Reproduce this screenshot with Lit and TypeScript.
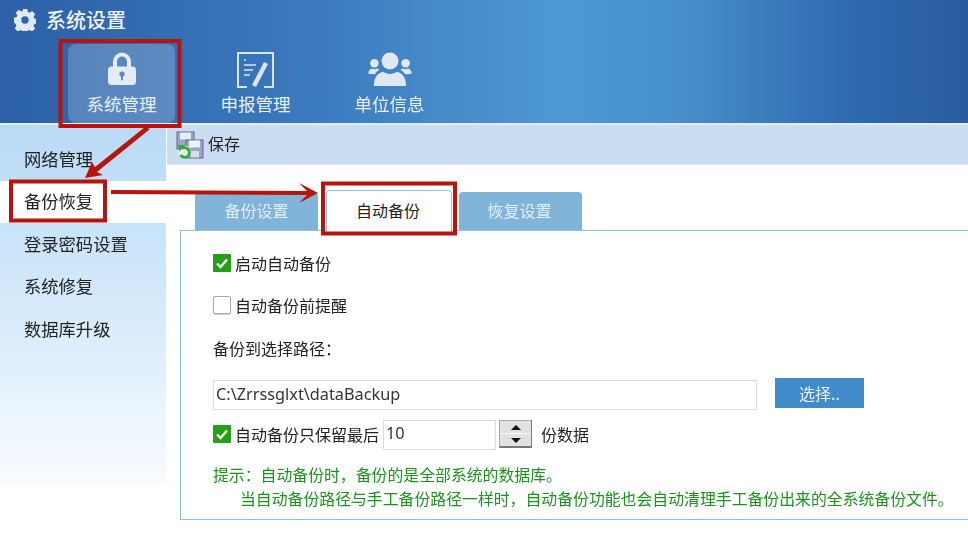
import { LitElement, html, css, svg } from "lit";
import { customElement } from "lit/decorators.js";

const gear = svg`<svg class="gear" viewBox="0 0 24 24" width="22" height="22"><path fill="#dfe8f3" fill-rule="evenodd" d="M9.500 0h5l.6 3.300 1.900.8 2.700-1.900 3.500 3.500-1.900 2.700.8 1.900 2.900.7v5l-2.900.6-.8 1.900 1.900 2.700-3.500 3.500-2.700-1.900-1.900.8-.6 3.300h-5l-.6-3.300-1.900-.8-2.700 1.900-3.500-3.500 1.900-2.700-.8-1.900L0 14.500v-5l2.900-.7.8-1.900-1.900-2.700 3.500-3.500 2.700 1.900 1.900-.8zM12 8a4 4 0 1 0 0 8 4 4 0 0 0 0-8z"/></svg>`;
const lock = svg`<svg viewBox="0 0 28 33" width="28" height="33"><path fill="none" stroke="#e3ebf5" stroke-width="4" d="M7 17V9.500a7 7 0 0 1 14 0V17"/><rect x="0" y="14.500" width="28" height="18.500" rx="3.500" fill="#e3ebf5"/><circle cx="14" cy="22" r="2.600" fill="#5f86bd"/><rect x="13" y="23" width="2" height="5.500" rx="1" fill="#5f86bd"/></svg>`;
const report = svg`<svg viewBox="0 0 37 36" width="37" height="36" fill="none" stroke="#d9e5f2"><path stroke-width="2" d="M10 35H1V1h35v34h-9"/><path stroke-width="1.600" d="M7 8h2M7 13h12M7 18h9M7 23h6"/><path stroke-width="4.500" d="M29 11 17 34"/></svg>`;
const people = svg`<svg viewBox="0 0 46 36" width="46" height="34" fill="#dfe8f3"><circle cx="23" cy="9.500" r="9"/><path d="M6 36c0-9 4-14 10-15 4 3 10 3 14 0 6 1 10 6 10 15-1 .6-33 .6-34 0z"/><circle cx="6.500" cy="12" r="4.500"/><path d="M0 23c0-3 2-5 4-5.500 2 1 3.500 1 5 0 1 .3 2 .8 3 1.500-2.500 1-4 2.500-5 4.500z"/><circle cx="39.500" cy="12" r="4.500"/><path d="M46 23c0-3-2-5-4-5.500-2 1-3.500 1-5 0-1 .3-2 .8-3 1.500 2.500 1 4 2.500 5 4.500z"/></svg>`;
const save = svg`<svg viewBox="0 0 28 28" width="28" height="28"><rect x="1" y="1" width="17" height="17" fill="#98a4c8" stroke="#5a6aa0"/><rect x="4" y="1.500" width="11" height="7" fill="#e8ecf5"/><rect x="10" y="9" width="17" height="18" fill="#9aa6c8" stroke="#5a6aa0"/><rect x="13" y="9.500" width="11" height="7" fill="#eef1f7"/><rect x="15" y="20" width="8" height="6.500" fill="#d9dde8"/><circle cx="8.500" cy="21" r="6.500" fill="#dff2df"/><path fill="none" stroke="#35a83a" stroke-width="2.800" d="M6 17.500a4.800 4.800 0 1 1-1.500 6.500"/><path fill="#35a83a" d="M2 14h7.500l-6 6.500z"/></svg>`;
const check = svg`<svg class="ck" viewBox="0 0 18 18" width="18" height="18"><rect width="18" height="18" rx="1" fill="#24a014"/><path d="M4 9.500 7.500 13 14 5.500" fill="none" stroke="#fff" stroke-width="2.400"/></svg>`;

@customElement("app-root")
export class AppRoot extends LitElement {
  static styles = css`
    :host { display: block; position: relative; width: 968px; height: 540px; overflow: hidden; background: #fff;
      font-family: "Noto Sans CJK SC", "Noto Sans", sans-serif; font-size: 16px; color: #222; line-height: 1; }
    .blur { width: 100%; height: 100%; filter: blur(0.4px); display: flex; flex-direction: column; }
    header { height: 123px; flex: none; border-bottom: 2px solid #e4eef8; box-sizing: content-box; display: flex; flex-direction: column;
      background: linear-gradient(90deg, #2b60a6 0%, #3a78bb 30%, #4e99d4 58%, #4690cc 70%, #3069ae 88%, #285c9f 100%); }
    .title { display: flex; align-items: center; gap: 10px; padding: 5px 0 0 14px; height: 35px; box-sizing: border-box; color: #eef4fb; font-size: 20px; font-weight: 500; flex: none; }
    nav { display: flex; gap: 27px; padding-left: 68px; flex: 1; }
    .nav-item { width: 107px; display: flex; flex-direction: column; align-items: center; color: #e6f0fa; font-size: 17.500px; border-radius: 8px; margin-top: 9px; padding-top: 8px; box-sizing: border-box; }
    .nav-item.on { background: rgba(255,255,255,.2); }
    .nav-ico { height: 36px; display: flex; align-items: flex-start; justify-content: center; margin-bottom: 7px; }
    .main { flex: 1; display: flex; min-height: 0; }
    aside { width: 166px; flex: none; padding-top: 13px; height: 347px; box-sizing: content-box;
      background: linear-gradient(180deg, #b9daf6 0%, #d2e8fa 45%, #f8fcff 100%); }
    aside div { height: 42.500px; box-sizing: border-box; display: flex; align-items: center; padding: 0 0 2px 24px; font-size: 17.300px; }
    aside div.on { background: #fff; }
    .content { flex: 1; min-width: 0; display: flex; flex-direction: column; }
    .toolbar { height: 36px; padding: 0 0 3px 9px; background: #cbddf2; border-bottom: 1px solid #dce8f6; margin-left: 1px; display: flex; align-items: center; gap: 4px; font-size: 16px; flex: none; box-sizing: content-box; }
    .toolbar svg { margin-top: 3px; }
    .tabs { display: flex; gap: 7px; padding: 26px 0 0 29px; align-items: flex-end; height: 39px; box-sizing: content-box; flex: none; }
    .tab { width: 123px; height: 38px; padding-bottom: 2px; box-sizing: border-box; display: flex; align-items: center; justify-content: center; background: #80b4d9; color: #e3eff8; border-radius: 4px 4px 0 0; }
    .tab.on { width: 126px; margin-left: 1px; background: #fff; color: #222; border: 1px solid #8fc0e4; border-bottom: none; margin-bottom: -2px; height: 42px; padding: 0 2px 4px 0; position: relative; z-index: 1; }
    .tab.last { padding-right: 2px; }
    .panel { margin-left: 14px; height: 290px; width: 820px; box-sizing: border-box; border: 1px solid #8fc0e4; padding: 23px 0 0 32px; flex: none; display: flex; flex-direction: column; }
    .row { display: flex; align-items: center; }
    .cb { width: 18px; height: 18px; flex: none; margin-right: 4px; display: block; }
    .cb.off { box-sizing: border-box; border: 1px solid #aaa; border-radius: 2px; background: #fff; box-shadow: 0 1px 1px #ccc; }
    .lbl { margin-left: 4px; }
    .r2 { margin-top: 24px; }
    .r3 { margin-top: 24px; height: 20px; }
    .r4 { margin-top: 22px; gap: 18px; align-items: flex-start; }
    .field { border: 1px solid #ddd; height: 30px; box-sizing: border-box; display: flex; align-items: center; padding: 0 0 2px 2px; font-family: "Noto Sans", sans-serif; font-size: 16.300px; color: #333; background: #fff; }
    .path { width: 544px; }
    button.pick { width: 89px; height: 30px; margin-top: -2px; border: none; background: #428bca; color: #e8f2fa; font: inherit; font-size: 16px; padding: 0; }
    .r5 { margin-top: 10px; }
    .r5 .lbl, .r5 .tail { margin-bottom: 3px; }
    .r5 .ck { margin-bottom: 2px; }
    .num { width: 113px; margin-left: 4px; padding-bottom: 4px; }
    .spin { width: 33px; height: 28px; margin: 0 9px 2px 3px; border: 1px solid #aaa; border-right-color: #777; border-bottom: 2px solid #777; box-sizing: border-box; background: #e2e2e2; display: flex; flex-direction: column; }
    .spin span { flex: 1; display: flex; align-items: center; justify-content: center; }
    .spin span + span { border-top: 1px solid #fff; }
    .spin i { width: 0; height: 0; border-left: 5px solid transparent; border-right: 5px solid transparent; }
    .up { border-bottom: 5px solid #111; }
    .down { border-top: 5px solid #111; }
    .hint { margin-top: 13px; color: #1f911f; font-size: 15.870px; line-height: 24px; }
    .hint div + div { padding-left: 27px; white-space: nowrap; }
    .notes { position: absolute; inset: 0; pointer-events: none; }
  `;

  render() {
    const side = ["网络管理", "备份恢复", "登录密码设置", "系统修复", "数据库升级"];
    return html`
      <div class="blur">
        <header>
          <div class="title">${gear}<span>系统设置</span></div>
          <nav>
            <div class="nav-item on"><div class="nav-ico">${lock}</div>系统管理</div>
            <div class="nav-item"><div class="nav-ico">${report}</div>申报管理</div>
            <div class="nav-item"><div class="nav-ico">${people}</div>单位信息</div>
          </nav>
        </header>
        <div class="main">
          <aside>${side.map((s, i) => html`<div class=${i === 1 ? "on" : ""}>${s}</div>`)}</aside>
          <div class="content">
            <div class="toolbar">${save}<span>保存</span></div>
            <div class="tabs">
              <div class="tab">备份设置</div>
              <div class="tab on">自动备份</div>
              <div class="tab last">恢复设置</div>
            </div>
            <div class="panel">
              <div class="row">${check}<span class="lbl">启动自动备份</span></div>
              <div class="row r2"><span class="cb off"></span>自动备份前提醒</div>
              <div class="row r3">备份到选择路径：</div>
              <div class="row r4"><div class="field path">C:\\Zrrssglxt\\dataBackup</div><button class="pick">选择..</button></div>
              <div class="row r5">${check}<span class="lbl">自动备份只保留最后</span><div class="field num">10</div>
                <div class="spin"><span><i class="up"></i></span><span><i class="down"></i></span></div><span class="tail">份数据</span></div>
              <div class="hint">
                <div>提示：自动备份时，备份的是全部系统的数据库。</div>
                <div>当自动备份路径与手工备份路径一样时，自动备份功能也会自动清理手工备份出来的全系统备份文件。</div>
              </div>
            </div>
          </div>
        </div>
      </div>
      <svg class="notes" viewBox="0 0 968 540" width="968" height="540">
        <g fill="none" stroke="#b7140c" stroke-width="4">
          <rect x="60.500" y="41" width="119" height="85"/>
          <rect x="11" y="181.500" width="94" height="39"/>
          <rect x="323" y="183.500" width="132" height="50"/>
        </g>
        <path fill="#b7140c" d="M145 127 150 129 97 172 103 175 85 178 92 162 95 167z"/>
        <path fill="#b7140c" d="M111 190 307 191 299 183 318 193 299 203 307 195 111 194z"/>
      </svg>
    `;
  }
}
